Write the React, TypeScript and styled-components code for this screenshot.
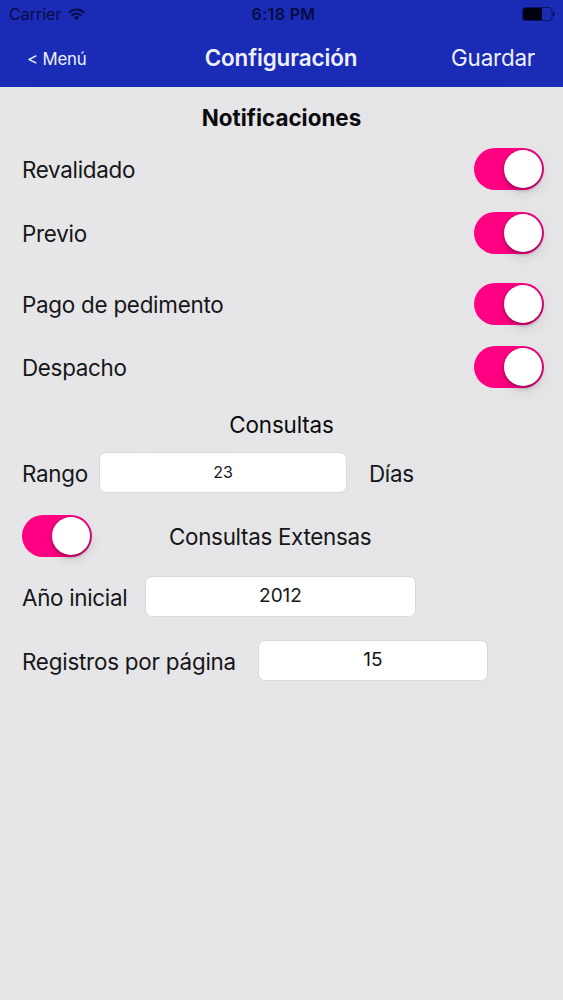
import React from "react";
import styled, { createGlobalStyle } from "styled-components";

const GlobalStyle = createGlobalStyle`
  *, *::before, *::after { box-sizing: border-box; }
  html, body { margin: 0; padding: 0; background: #e5e5e7; }
  body { font-family: Inter, "Liberation Sans", sans-serif; color: #161619; }
`;

const Screen = styled.div`
  display: flex;
  flex-direction: column;
  width: 563px;
  height: 1000px;
  overflow: hidden;
  background: linear-gradient(100deg, #e7e7e6 0%, #e6e6e8 14%, #e5e4e7 100%);
`;

const Header = styled.header`
  height: 87px;
  background: #1a2bb6;
  color: #eef1fd;
`;

const StatusBar = styled.div`
  display: grid;
  grid-template-columns: 1fr auto 1fr;
  align-items: center;
  height: 28px;
  padding: 0 8px 0 9px;
  color: #070c45;
`;

const Carrier = styled.div`
  display: flex;
  align-items: center;
  gap: 7px;
`;

const Clock = styled.div`
  padding-left: 3px;
`;

const BatterySlot = styled.div`
  display: flex;
  justify-content: flex-end;
`;

const NavBar = styled.nav`
  display: grid;
  grid-template-columns: 1fr auto 1fr;
  align-items: center;
  height: 59px;
  padding: 0 28px 0 27px;
`;

const NavButton = styled.button<{ $align: "start" | "end"; $drop?: number }>`
  justify-self: ${(p) => p.$align};
  padding: ${(p) => p.$drop ?? 0}px 0 0;
  border: 0;
  background: none;
  color: inherit;
  font-family: inherit;
`;

const Text = styled.span<{ $size?: number; $weight?: number; $spacing?: number }>`
  display: block;
  font-size: ${(p) => p.$size ?? 22.4}px;
  font-weight: ${(p) => p.$weight ?? 400};
  letter-spacing: ${(p) => p.$spacing ?? 0}px;
  line-height: 28px;
  white-space: nowrap;
`;

const Content = styled.main`
  display: flex;
  flex-direction: column;
  padding: 0 19px 0 22px;
`;

const SectionTitle = styled.h2<{ $height: number; $gapAfter?: number }>`
  display: flex;
  align-items: center;
  justify-content: center;
  height: ${(p) => p.$height}px;
  margin: 0 0 ${(p) => p.$gapAfter ?? 0}px;
  padding-right: 3px;
  color: #0b0b0d;
  font-weight: 400;
`;

const Row = styled.div<{ $gapAfter: number; $between?: boolean }>`
  display: flex;
  align-items: center;
  justify-content: ${(p) => (p.$between ? "space-between" : "flex-start")};
  height: 42px;
  margin-bottom: ${(p) => p.$gapAfter}px;
`;

const Label = styled.div<{ $width?: number; $before?: number }>`
  flex: none;
  width: ${(p) => (p.$width ? `${p.$width}px` : "auto")};
  margin-left: ${(p) => p.$before ?? 0}px;
  padding-top: 2px;
`;

const Toggle = styled.button`
  display: flex;
  flex: none;
  justify-content: flex-end;
  width: 70px;
  height: 42px;
  padding: 2px;
  border: 0;
  border-radius: 21px;
  background: #ff0082;
`;

const Thumb = styled.span`
  width: 38.5px;
  height: 38px;
  border-radius: 50%;
  background: #fff;
  box-shadow: 0 3px 3px rgba(70, 0, 45, 0.25), 1px 5px 12px rgba(0, 0, 0, 0.1), 0 0 2px rgba(70, 0, 45, 0.5);
`;

const Field = styled.div<{ $width: number }>`
  display: flex;
  flex: none;
  justify-content: center;
  width: ${(p) => p.$width}px;
  height: 41px;
  padding-top: 5px;
  border: 1px solid #d9d8dc;
  border-radius: 7px;
  background: #fff;
`;

const Switch = ({ label }: { label: string }) => (
  <Toggle role="switch" aria-checked="true" aria-label={label}>
    <Thumb />
  </Toggle>
);

const WifiIcon = () => (
  <svg width="17" height="13" viewBox="0 0 17 13" fill="none" stroke="#070c45" strokeWidth="2">
    <path d="M1 4.7a10.6 10.6 0 0 1 15 0" />
    <path d="M3.7 7.5a6.8 6.8 0 0 1 9.6 0" />
    <path d="M8.5 12.3 5.7 9.5a4 4 0 0 1 5.6 0z" fill="#070c45" stroke="none" />
  </svg>
);

const BatteryIcon = () => (
  <svg width="33" height="14" viewBox="0 0 33 14">
    <rect x="0.5" y="0.5" width="29.5" height="13" rx="3" fill="none" stroke="#0b1266" />
    <path d="M3 1h17v12H3a2 2 0 0 1-2-2V3a2 2 0 0 1 2-2z" fill="#01020f" />
    <path d="M31 4.500c2.200.8 2.200 4.200 0 5z" fill="#070c45" />
  </svg>
);

const notifications = [
  { label: "Revalidado", gap: 22, spacing: -0.3 },
  { label: "Previo", gap: 28.5, spacing: -0.25 },
  { label: "Pago de pedimento", gap: 21.5, spacing: -0.25 },
  { label: "Despacho", gap: 14.5, spacing: -0.3 },
];

export default function App() {
  return (
    <>
      <GlobalStyle />
      <Screen>
        <Header>
          <StatusBar>
            <Carrier>
              <Text $size={16}>Carrier</Text>
              <WifiIcon />
            </Carrier>
            <Clock><Text $size={16} $weight={600} $spacing={0.35}>6:18 PM</Text></Clock>
            <BatterySlot><BatteryIcon /></BatterySlot>
          </StatusBar>
          <NavBar>
            <NavButton $align="start" $drop={3}><Text $size={16.8} $spacing={-0.2}>&lt; Menú</Text></NavButton>
            <Text $weight={600} $spacing={-0.1}>Configuración</Text>
            <NavButton $align="end"><Text $spacing={-0.2}>Guardar</Text></NavButton>
          </NavBar>
        </Header>
        <Content>
          <SectionTitle $height={61}><Text $weight={700}>Notificaciones</Text></SectionTitle>
          {notifications.map((item) => (
            <Row key={item.label} $gapAfter={item.gap} $between>
              <Label><Text $spacing={item.spacing}>{item.label}</Text></Label>
              <Switch label={item.label} />
            </Row>
          ))}
          <SectionTitle $height={44} $gapAfter={5}><Text $spacing={-0.15}>Consultas</Text></SectionTitle>
          <Row $gapAfter={21}>
            <Label $width={77}><Text $spacing={-0.25}>Rango</Text></Label>
            <Field $width={248}><Text $size={16}>23</Text></Field>
            <Label $before={22}><Text $spacing={-0.3}>Días</Text></Label>
          </Row>
          <Row $gapAfter={19}>
            <Switch label="Consultas Extensas" />
            <Label $before={77}><Text $spacing={-0.3}>Consultas Extensas</Text></Label>
          </Row>
          <Row $gapAfter={22}>
            <Label $width={123}><Text $spacing={-0.3}>Año inicial</Text></Label>
            <Field $width={271}><Text $size={19}>2012</Text></Field>
          </Row>
          <Row $gapAfter={0}>
            <Label $width={236}><Text $spacing={-0.22}>Registros por página</Text></Label>
            <Field $width={230}><Text $size={19}>15</Text></Field>
          </Row>
        </Content>
      </Screen>
    </>
  );
}
